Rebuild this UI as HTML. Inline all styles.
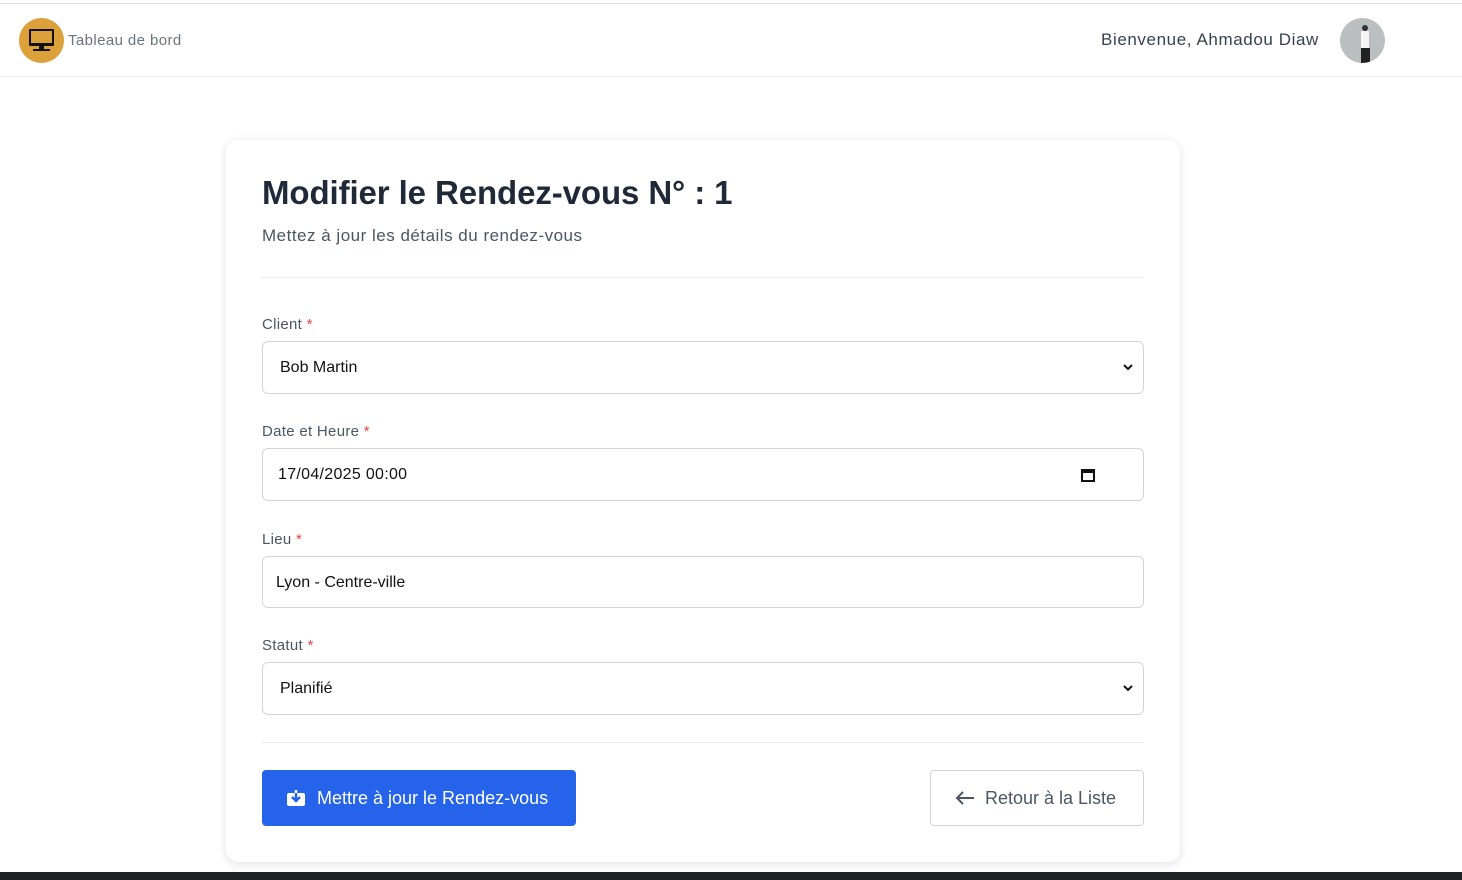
<!DOCTYPE html>
<html><head><meta charset="utf-8"><style>
*{box-sizing:border-box;margin:0;padding:0}
body{width:1462px;height:880px;background:#fff;font-family:"Liberation Sans",sans-serif;position:relative;overflow:hidden;color:#1f2937}
.topline{position:absolute;top:3px;left:0;right:0;height:1px;background:#e2e2e2}
.nav{position:absolute;top:4px;left:0;right:0;height:73px;border-bottom:1px solid #f0f0f0}
.logo{position:absolute;left:19px;top:14px;width:45px;height:45px;border-radius:50%;background:#dca13a}
.brand{position:absolute;left:68px;top:28px;font-size:15px;color:#6b7280;letter-spacing:.4px}
.welcome{position:absolute;left:1101px;top:26px;font-size:17px;color:#374151;letter-spacing:.6px}
.avatar{position:absolute;left:1340px;top:14px;width:45px;height:45px;border-radius:50%;background:#bcbfbf;overflow:hidden}
.card{position:absolute;left:226px;top:140px;width:954px;height:722px;border-radius:12px;background:#fff;box-shadow:0 2px 10px rgba(0,0,0,.12)}
h1{position:absolute;left:36px;top:34px;font-size:33px;font-weight:bold;color:#1f2937;letter-spacing:-.1px}
.sub{position:absolute;left:36px;top:86px;font-size:17px;color:#4b5563;letter-spacing:.5px}
.hr{position:absolute;left:36px;width:882px;height:1px;background:#e5e7eb}
.lbl{position:absolute;left:36px;font-size:15px;color:#4b5563;letter-spacing:.3px}
.lbl b{color:#ef4444;font-weight:normal}
.inp{position:absolute;left:36px;width:882px;height:53px;border:1px solid #d1d5db;border-radius:6px;font-size:16px;color:#111;padding:0 17px;line-height:51px}
.chev{position:absolute;right:10px;top:22px}
.btn1{position:absolute;left:36px;top:630px;width:314px;height:56px;background:#2563eb;border-radius:4px;color:#fff;font-size:18px;line-height:56px;padding-left:55px}
.btn2{position:absolute;left:704px;top:630px;width:214px;height:56px;border:1px solid #d1d5db;border-radius:4px;color:#4b5563;font-size:18px;line-height:54px;padding-left:54px}
.bottom{position:absolute;left:0;right:0;top:872px;height:8px;background:#1f2326}
</style></head><body>
<div class="topline"></div>
<div class="nav">
<div class="logo"><svg width="45" height="45" viewBox="0 0 45 45"><rect x="10" y="11" width="25" height="17" rx="1" fill="#111"/><rect x="12" y="13" width="21" height="12" fill="#dca13a"/><rect x="20" y="28" width="5" height="3" fill="#111"/><rect x="14" y="31" width="17" height="2" fill="#111"/></svg></div>
<div class="brand">Tableau de bord</div>
<div class="welcome">Bienvenue, Ahmadou Diaw</div>
<div class="avatar"><svg width="45" height="45"><circle cx="25" cy="10" r="3" fill="#333"/><rect x="21" y="13" width="8" height="20" fill="#f4f4f4"/><rect x="21" y="30" width="9" height="15" fill="#222"/></svg></div>
</div>
<div class="card">
<h1>Modifier le Rendez-vous N° : 1</h1>
<div class="sub">Mettez à jour les détails du rendez-vous</div>
<div class="hr" style="top:137px"></div>
<div class="lbl" style="top:176px">Client <b>*</b></div>
<div class="inp" style="top:201px">Bob Martin<svg class="chev" width="10" height="7" viewBox="0 0 10 7"><path d="M1 1l4 4 4-4" stroke="#111" stroke-width="2" fill="none"/></svg></div>
<div class="lbl" style="top:283px">Date et Heure <b>*</b></div>
<div class="inp" style="top:308px;padding-left:15px;letter-spacing:.3px">17/04/2025 00:00<svg style="position:absolute;right:48px;top:19px" width="14" height="14" viewBox="0 0 14 14"><rect x="1" y="2" width="12" height="11" fill="none" stroke="#111" stroke-width="2"/><rect x="1" y="2" width="12" height="3" fill="#111"/></svg></div>
<div class="lbl" style="top:391px">Lieu <b>*</b></div>
<div class="inp" style="top:416px;padding-left:13px;height:52px">Lyon - Centre-ville</div>
<div class="lbl" style="top:497px">Statut <b>*</b></div>
<div class="inp" style="top:522px">Planifié<svg class="chev" width="10" height="7" viewBox="0 0 10 7"><path d="M1 1l4 4 4-4" stroke="#111" stroke-width="2" fill="none"/></svg></div>
<div class="hr" style="top:602px"></div>
<div class="btn1"><svg style="position:absolute;left:25px;top:20px" width="18" height="16" viewBox="0 0 18 16"><rect x="0" y="3" width="18" height="13" rx="2" fill="#fff"/><path d="M9 0v10M5 7l4 4 4-4" stroke="#2563eb" stroke-width="2.5" fill="none"/><path d="M9 0v3" stroke="#fff" stroke-width="2.5"/></svg>Mettre à jour le Rendez-vous</div>
<div class="btn2"><svg style="position:absolute;left:24px;top:19px" width="20" height="16" viewBox="0 0 20 16"><path d="M19 8H2M8 2L2 8l6 6" stroke="#4b5563" stroke-width="2" fill="none"/></svg>Retour à la Liste</div>
</div>
<div class="bottom"></div>
</body></html>
